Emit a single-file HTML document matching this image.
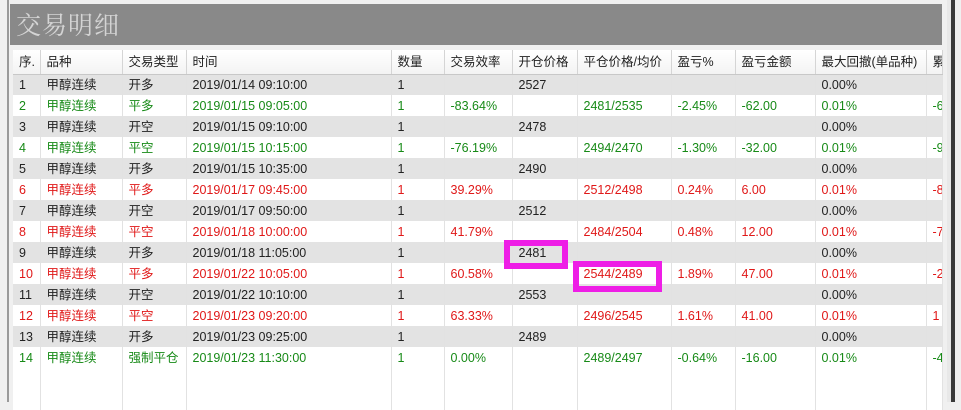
<!DOCTYPE html>
<html><head><meta charset="utf-8"><style>
*{margin:0;padding:0;box-sizing:border-box}
body{width:961px;height:402px;background:#f0f0f0;position:relative;overflow:hidden;font-family:"Liberation Sans","Noto Sans CJK SC",sans-serif;font-size:12.5px}
.lb{position:absolute;left:7px;top:0;width:2px;height:402px;background:#9a9a9a}
.rb{position:absolute;left:951px;top:0;width:4px;height:402px;background:#3a3a3a}
.rb2{position:absolute;left:947px;top:0;width:4px;height:402px;background:#e8e8e8}
.panel{position:absolute;left:10px;top:0;width:932px;height:402px;background:#f0f0f0}
.bar{position:absolute;left:10px;top:4px;width:932px;height:41px;background:#898989;color:#d4d4d4;font-family:"Noto Serif CJK SC","Liberation Serif",serif;font-size:25px;line-height:40px;padding-left:6px;letter-spacing:1px}
table{position:absolute;left:13px;top:50px;border-collapse:collapse;table-layout:fixed;width:929px;background:#fff}
td,th{height:21px;padding:0 0 0 6px;white-space:nowrap;overflow:hidden;border-right:1px solid #e2e2e2;text-align:left;font-weight:normal;line-height:20px}
th{height:24px;background:linear-gradient(#fff,#f3f3f3);border-right:1px solid #d5d5d5;border-bottom:1px solid #c8c8c8;color:#222}
tr.g td{background:#e3e3e3}
tr.k td{color:#222}tr.r td{color:#e01818}tr.n td{color:#178a17}
.box{position:absolute;border:6px solid #ee1ee6}
</style></head><body>
<div class="lb"></div><div class="panel"></div><div class="rb2"></div><div class="rb"></div>
<div class="bar">交易明细</div>
<table>
<colgroup><col style="width:27px"><col style="width:82px"><col style="width:64px"><col style="width:205px"><col style="width:53px"><col style="width:68px"><col style="width:65px"><col style="width:94px"><col style="width:64px"><col style="width:80px"><col style="width:111px"><col style="width:16px"></colgroup>
<tr><th>序.</th><th>品种</th><th>交易类型</th><th>时间</th><th>数量</th><th>交易效率</th><th>开仓价格</th><th>平仓价格/均价</th><th>盈亏%</th><th>盈亏金额</th><th>最大回撤(单品种)</th><th>累</th></tr>
<tr class="g k"><td>1</td><td>甲醇连续</td><td>开多</td><td>2019/01/14 09:10:00</td><td>1</td><td></td><td>2527</td><td></td><td></td><td></td><td>0.00%</td><td></td></tr>
<tr class="n"><td>2</td><td>甲醇连续</td><td>平多</td><td>2019/01/15 09:05:00</td><td>1</td><td>-83.64%</td><td></td><td>2481/2535</td><td>-2.45%</td><td>-62.00</td><td>0.01%</td><td>-6</td></tr>
<tr class="g k"><td>3</td><td>甲醇连续</td><td>开空</td><td>2019/01/15 09:10:00</td><td>1</td><td></td><td>2478</td><td></td><td></td><td></td><td>0.00%</td><td></td></tr>
<tr class="n"><td>4</td><td>甲醇连续</td><td>平空</td><td>2019/01/15 10:15:00</td><td>1</td><td>-76.19%</td><td></td><td>2494/2470</td><td>-1.30%</td><td>-32.00</td><td>0.01%</td><td>-9</td></tr>
<tr class="g k"><td>5</td><td>甲醇连续</td><td>开多</td><td>2019/01/15 10:35:00</td><td>1</td><td></td><td>2490</td><td></td><td></td><td></td><td>0.00%</td><td></td></tr>
<tr class="r"><td>6</td><td>甲醇连续</td><td>平多</td><td>2019/01/17 09:45:00</td><td>1</td><td>39.29%</td><td></td><td>2512/2498</td><td>0.24%</td><td>6.00</td><td>0.01%</td><td>-8</td></tr>
<tr class="g k"><td>7</td><td>甲醇连续</td><td>开空</td><td>2019/01/17 09:50:00</td><td>1</td><td></td><td>2512</td><td></td><td></td><td></td><td>0.00%</td><td></td></tr>
<tr class="r"><td>8</td><td>甲醇连续</td><td>平空</td><td>2019/01/18 10:00:00</td><td>1</td><td>41.79%</td><td></td><td>2484/2504</td><td>0.48%</td><td>12.00</td><td>0.01%</td><td>-7</td></tr>
<tr class="g k"><td>9</td><td>甲醇连续</td><td>开多</td><td>2019/01/18 11:05:00</td><td>1</td><td></td><td>2481</td><td></td><td></td><td></td><td>0.00%</td><td></td></tr>
<tr class="r"><td>10</td><td>甲醇连续</td><td>平多</td><td>2019/01/22 10:05:00</td><td>1</td><td>60.58%</td><td></td><td>2544/2489</td><td>1.89%</td><td>47.00</td><td>0.01%</td><td>-2</td></tr>
<tr class="g k"><td>11</td><td>甲醇连续</td><td>开空</td><td>2019/01/22 10:10:00</td><td>1</td><td></td><td>2553</td><td></td><td></td><td></td><td>0.00%</td><td></td></tr>
<tr class="r"><td>12</td><td>甲醇连续</td><td>平空</td><td>2019/01/23 09:20:00</td><td>1</td><td>63.33%</td><td></td><td>2496/2545</td><td>1.61%</td><td>41.00</td><td>0.01%</td><td>1</td></tr>
<tr class="g k"><td>13</td><td>甲醇连续</td><td>开多</td><td>2019/01/23 09:25:00</td><td>1</td><td></td><td>2489</td><td></td><td></td><td></td><td>0.00%</td><td></td></tr>
<tr class="n"><td>14</td><td>甲醇连续</td><td>强制平仓</td><td>2019/01/23 11:30:00</td><td>1</td><td>0.00%</td><td></td><td>2489/2497</td><td>-0.64%</td><td>-16.00</td><td>0.01%</td><td>-4</td></tr>
<tr><td></td><td></td><td></td><td></td><td></td><td></td><td></td><td></td><td></td><td></td><td></td><td></td></tr>
<tr><td></td><td></td><td></td><td></td><td></td><td></td><td></td><td></td><td></td><td></td><td></td><td></td></tr>
</table>
<div class="box" style="left:504px;top:240px;width:64px;height:29px"></div>
<div class="box" style="left:573px;top:261px;width:89px;height:31px"></div>
</body></html>
